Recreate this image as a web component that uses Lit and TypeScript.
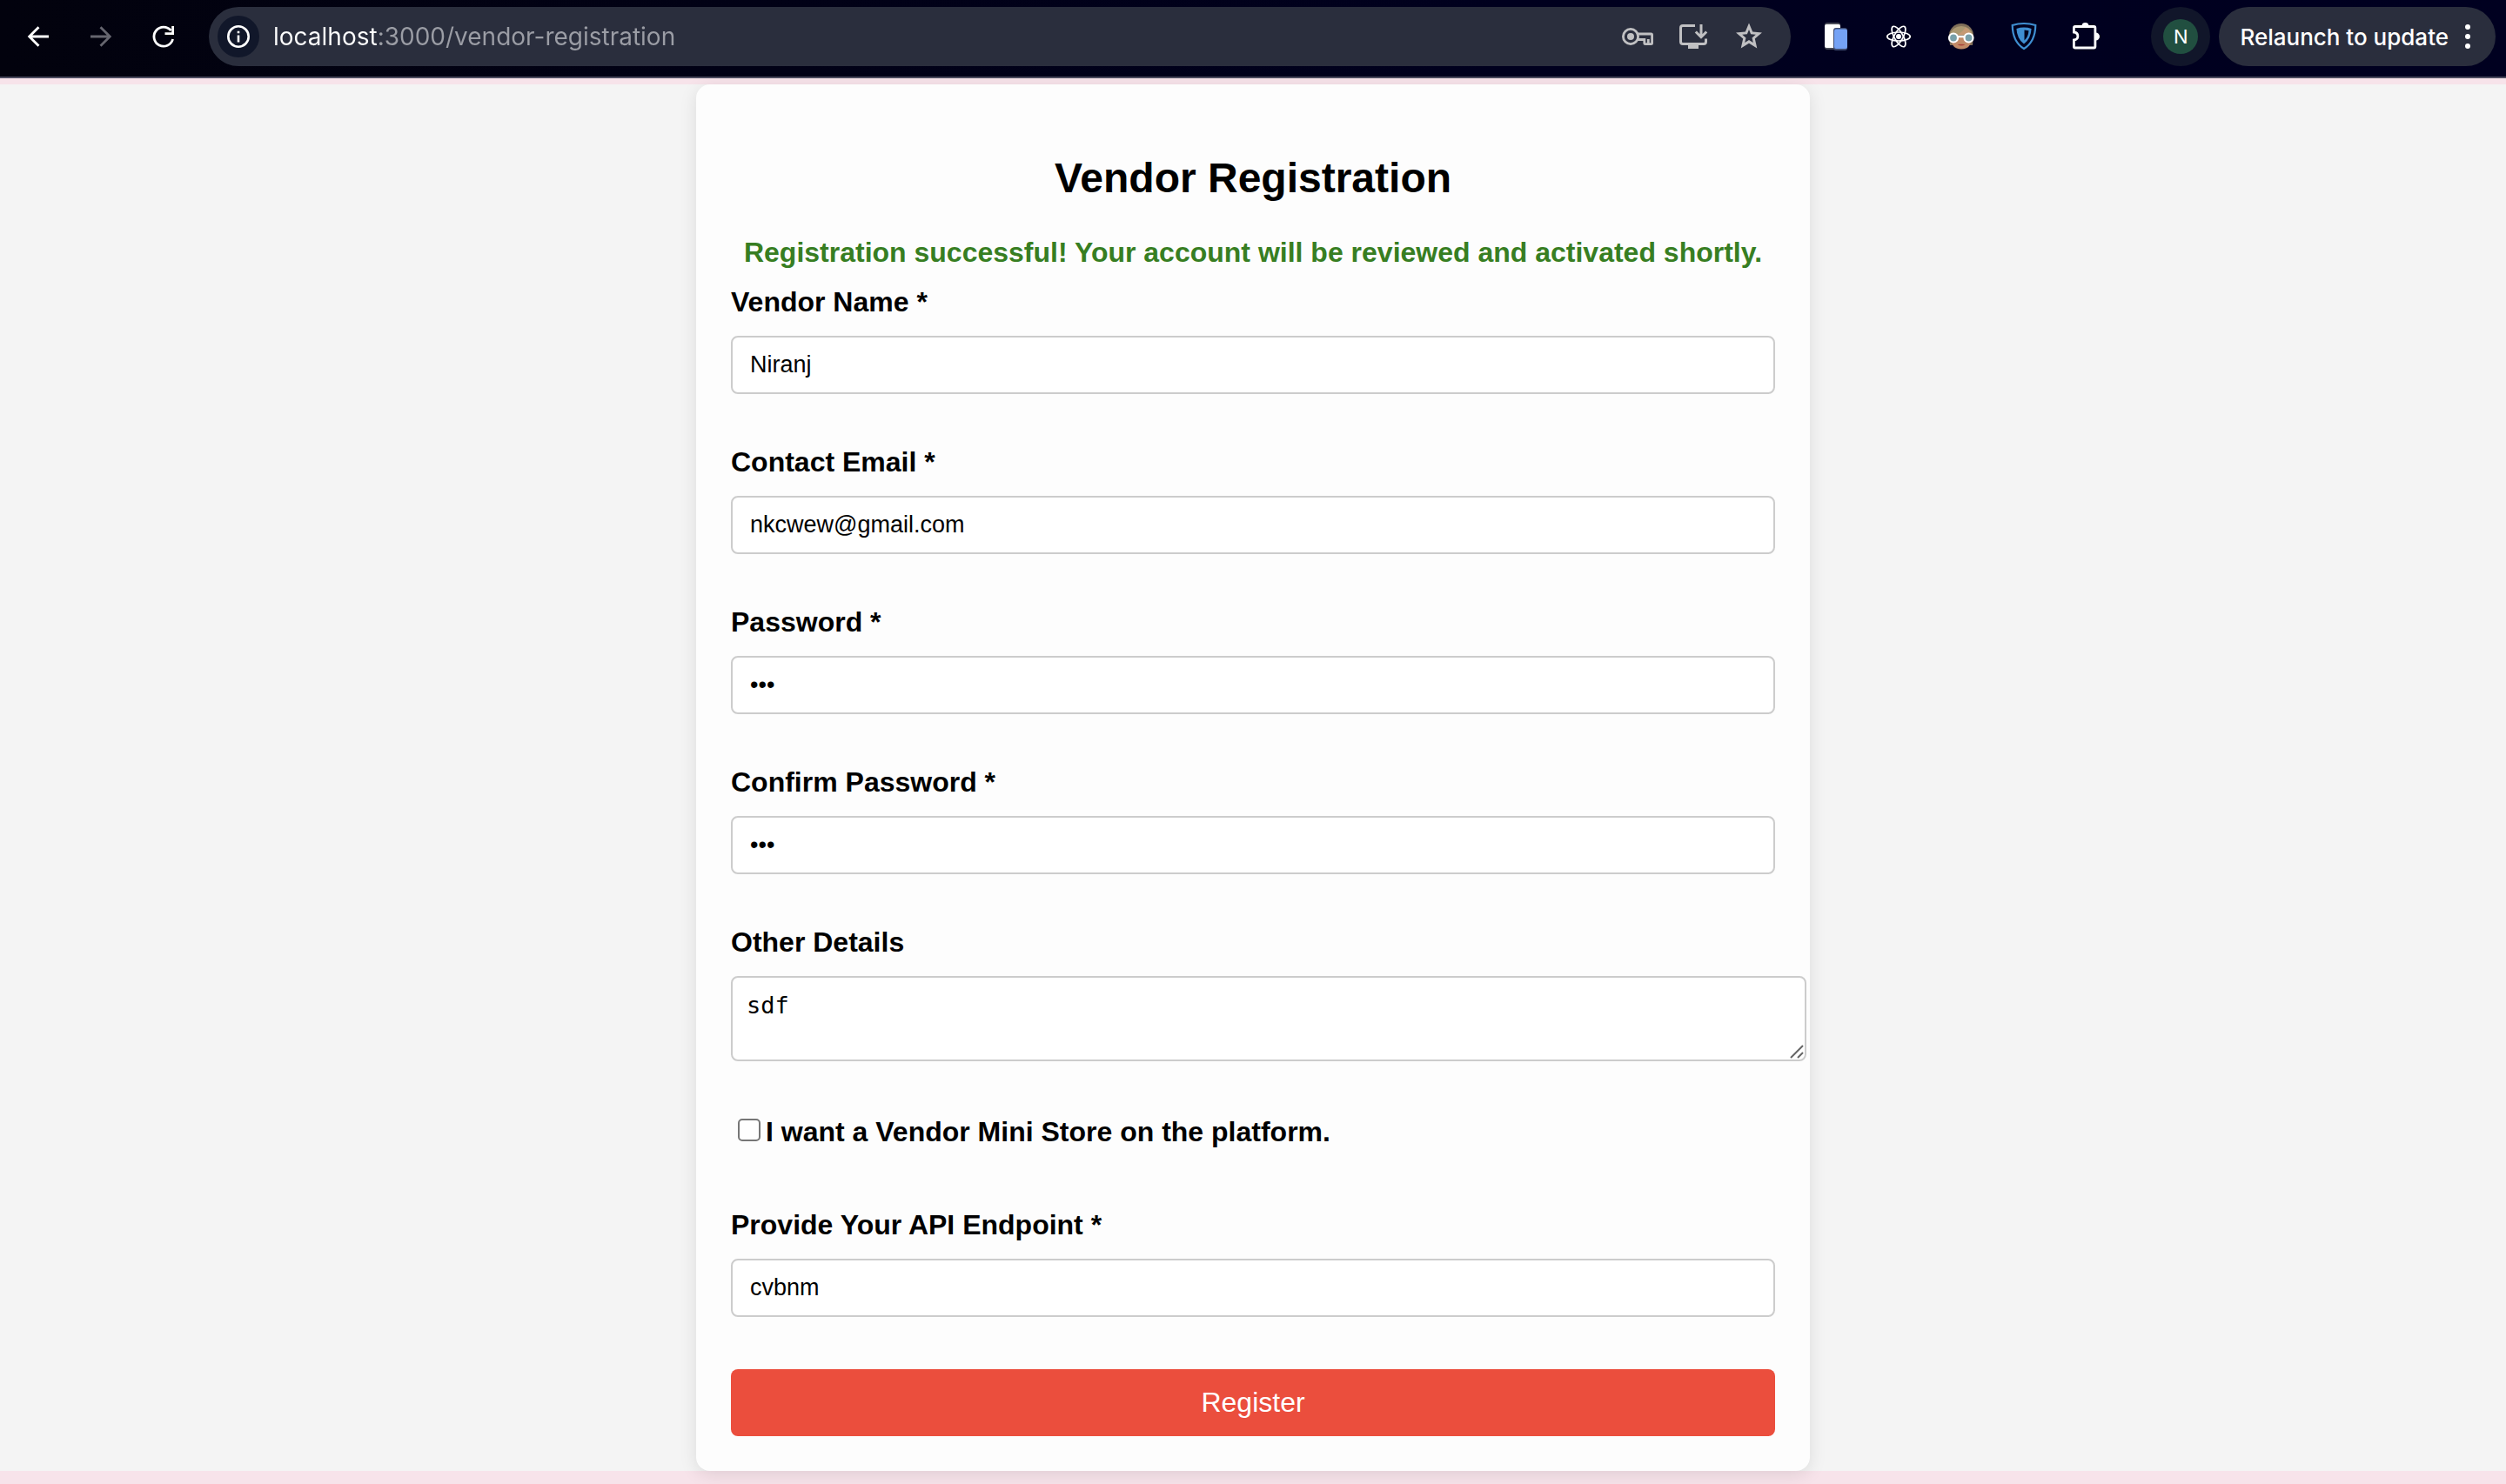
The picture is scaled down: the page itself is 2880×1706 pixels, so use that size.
import { LitElement, css, html, svg } from "lit";
import { customElement, property } from "lit/decorators.js";

type Field = { id: string; label: string; type: string; value: string };

const ACCOUNT_FIELDS: Field[] = [
  { id: "vendor-name", label: "Vendor Name *", type: "text", value: "Niranj" },
  { id: "contact-email", label: "Contact Email *", type: "email", value: "nkcwew@gmail.com" },
  { id: "password", label: "Password *", type: "password", value: "sdf" },
  { id: "confirm-password", label: "Confirm Password *", type: "password", value: "sdf" },
];

const ENDPOINT_FIELD: Field = {
  id: "api-endpoint",
  label: "Provide Your API Endpoint *",
  type: "text",
  value: "cvbnm",
};

/* All icons share a 36 by 36 canvas. */
const ICONS = {
  back: svg`<path d="M30 18H8M18.500 7.200L7.700 18L18.500 28.800" fill="none" stroke="currentColor" stroke-width="2.800"/>`,
  forward: svg`<path d="M6 18H28M17.500 7.200L28.300 18L17.500 28.800" fill="none" stroke="currentColor" stroke-width="2.800"/>`,
  reload: svg`<path d="M28.600 21A11 11 0 1 1 26.500 11.200" fill="none" stroke="currentColor" stroke-width="2.800"/><path d="M30 6V16H19.500V13.300H27.200V6Z" fill="currentColor"/>`,
  info: svg`<circle cx="18" cy="18" r="11.700" fill="none" stroke="currentColor" stroke-width="2.600"/><path d="M16.700 16.500H19.300V24.500H16.700ZM16.700 11.700H19.300V14.300H16.700Z" fill="currentColor"/>`,
  key: svg`<circle cx="10" cy="18" r="8.600" fill="none" stroke="currentColor" stroke-width="2.800"/><circle cx="10" cy="18" r="4" fill="currentColor"/><path d="M18 15H33.500Q34.600 15 34.600 16.200V25.500Q34.600 26.600 33.500 26.600H27Q25.800 26.600 25.800 25.500V21.500H18M30.300 21V26" fill="none" stroke="currentColor" stroke-width="2.800"/>`,
  install: svg`<path d="M20 5.500H6Q3.500 5.500 3.500 8V24Q3.500 26.500 6 26.500H30Q32.500 26.500 32.500 24V20.500" fill="none" stroke="currentColor" stroke-width="3"/><path d="M12 27H24V32H12Z" fill="currentColor"/><path d="M27 4V18M20.800 12.500L27 18.700L33.200 12.500" fill="none" stroke="currentColor" stroke-width="3"/>`,
  star: svg`<path fill-rule="evenodd" fill="currentColor" d="M18 2.500L22.200 12.500L33 13.400L24.800 20.500L27.300 31.500L18 25.700L8.700 31.500L11.200 20.500L3 13.400L13.800 12.500ZM18 10L15.900 15.200L10.200 15.700L14.500 19.400L13.200 25L18 22L22.800 25L21.500 19.400L25.800 15.700L20.100 15.200Z"/>`,
  devices: svg`<rect x="5" y="2" width="18" height="31" rx="3" fill="#4a4c58"/><rect x="5" y="4" width="18" height="27" rx="2" fill="#fff"/><rect x="15" y="8" width="16" height="26" rx="3" fill="#3f4c70"/><rect x="16" y="9.500" width="15" height="22.500" rx="2" fill="#75a2f5"/>`,
  atom: svg`<g fill="none" stroke="currentColor" stroke-width="1.700"><ellipse cx="18" cy="18" rx="13.200" ry="5"/><ellipse cx="18" cy="18" rx="13.200" ry="5" transform="rotate(60 18 18)"/><ellipse cx="18" cy="18" rx="13.200" ry="5" transform="rotate(120 18 18)"/></g><circle cx="18" cy="18" r="3" fill="currentColor"/>`,
  face: svg`<path d="M4 17A14 14 0 0 1 32 17L31 28H5Z" fill="#80705a"/><path d="M6 18H30Q30 32.500 18 32.500Q6 32.500 6 18Z" fill="#c18a67"/><path d="M4.500 16A14 13.500 0 0 1 31.500 16Z" fill="#aa9872"/><path d="M14 16Q20 12 23 7.500Q28 10 30 16Z" fill="#c59a74"/><path d="M13.500 27Q18 30 22.500 27Q18 26.500 13.500 27Z" fill="#a8453b"/><path d="M14 18H22" stroke="#fff" stroke-width="2.500"/><circle cx="9" cy="19.500" r="5" fill="#78a0aa" stroke="#fff" stroke-width="2.200"/><circle cx="26.500" cy="19.500" r="5" fill="#78a0aa" stroke="#fff" stroke-width="2.200"/>`,
  shield: svg`<path d="M18 3Q25 3 31.300 5Q31 24 18 32Q5 24 4.700 5Q11 3 18 3Z" fill="none" stroke="#3f8fd2" stroke-width="2.200"/><path d="M18 7.600Q22.500 7.600 26.600 8.900Q26 20.500 18 26.600Q10 20.500 9.400 8.900Q13.500 7.600 18 7.600Z" fill="#3f8fd2"/><path d="M18.500 10.500L23.500 11.200Q23 18.500 18.500 22.500Z" fill="#02051f"/>`,
  puzzle: svg`<path d="M5.500 8Q4 8 4 9.500V14.500Q8.500 15 8.500 19Q8.500 23 4 23.500V31Q4 32.500 5.500 32.500H27Q28.500 32.500 28.500 31V9.500Q28.500 8 27 8Z" fill="none" stroke="currentColor" stroke-width="2.800" transform="translate(-.6 -1.500)"/><path d="M12.500 6A4 4 0 0 1 20.500 6ZM28.500 13.500A4.500 4.500 0 0 1 28.500 22.500Z" fill="currentColor"/>`,
  more: svg`<circle cx="18" cy="7" r="3" fill="currentColor"/><circle cx="18" cy="18" r="3" fill="currentColor"/><circle cx="18" cy="29" r="3" fill="currentColor"/>`,
  grip: svg`<path d="M18 32L32 18M26 32L32 26" fill="none" stroke="#666" stroke-width="2"/>`,
};

const icon = (name: keyof typeof ICONS) =>
  html`<svg class="icon" viewBox="0 0 36 36" aria-hidden="true">${ICONS[name]}</svg>`;

@customElement("browser-bar")
export class BrowserBar extends LitElement {
  static styles = css`
    :host {
      display: block;
      font-family: Inter, "Liberation Sans", sans-serif;
    }
    .bar {
      display: flex;
      align-items: center;
      height: 68px;
      padding: 8px 12px 12px 8px;
      border-bottom: 2px solid #4b4a5e;
      background: linear-gradient(90deg, #02020d, #00001e 60%, #000020);
      color: #fff;
    }
    button {
      display: flex;
      align-items: center;
      justify-content: center;
      margin: 0;
      padding: 0;
      border: 0;
      background: none;
      color: inherit;
      font: inherit;
    }
    .icon {
      display: block;
      width: 36px;
      height: 36px;
    }
    .tool {
      width: 72px;
      height: 68px;
    }
    .tool:disabled {
      color: #66666f;
    }
    .address {
      display: flex;
      flex: 1;
      align-items: center;
      min-width: 0;
      height: 68px;
      margin: 0 16px;
      padding: 0 16px 0 10px;
      box-sizing: border-box;
      border-radius: 34px;
      background: #2a2e3d;
      color: #c0c0c2;
    }
    .site {
      width: 48px;
      height: 48px;
      border-radius: 24px;
      background: #11172a;
      color: #fff;
    }
    .url {
      flex: 1;
      min-width: 0;
      height: 40px;
      margin: 0;
      padding: 0 0 0 16px;
      border: 0;
      outline: 0;
      background: linear-gradient(90deg, #fff 136px, #9b9da5 136px);
      background-clip: text;
      -webkit-background-clip: text;
      color: transparent;
      font: 400 28px/40px Inter, "Liberation Sans", sans-serif;
    }
    .action {
      width: 64px;
      height: 68px;
    }
    .profile {
      width: 68px;
      height: 68px;
      margin: 0 10px 0 38px;
      border-radius: 34px;
      background: #11162a;
    }
    .initial {
      width: 40px;
      border-radius: 20px;
      background: #214f40;
      font-size: 22px;
      line-height: 40px;
    }
    .update {
      gap: 4px;
      height: 68px;
      padding: 0 14px 0 24px;
      border-radius: 34px;
      background: #2a2e3d;
      font-size: 26px;
      font-weight: 500;
      white-space: nowrap;
    }
  `;

  render() {
    return html`
      <header class="bar">
        <button class="tool" aria-label="Back">${icon("back")}</button>
        <button class="tool" aria-label="Forward" disabled>${icon("forward")}</button>
        <button class="tool" aria-label="Reload">${icon("reload")}</button>
        <div class="address">
          <button class="site" aria-label="Site information">${icon("info")}</button>
          <input class="url" type="text" aria-label="Address" value="localhost:3000/vendor-registration" />
          <button class="action" aria-label="Passwords">${icon("key")}</button>
          <button class="action" aria-label="Install">${icon("install")}</button>
          <button class="action" aria-label="Bookmark">${icon("star")}</button>
        </div>
        <button class="tool" aria-label="Devices">${icon("devices")}</button>
        <button class="tool" aria-label="React tools">${icon("atom")}</button>
        <button class="tool" aria-label="Reader">${icon("face")}</button>
        <button class="tool" aria-label="VPN">${icon("shield")}</button>
        <button class="tool" aria-label="Extensions">${icon("puzzle")}</button>
        <button class="profile" aria-label="Profile"><span class="initial">N</span></button>
        <button class="update">Relaunch to update ${icon("more")}</button>
      </header>
    `;
  }
}

@customElement("vendor-form")
export class VendorForm extends LitElement {
  @property({ type: Boolean }) registered = false;

  static styles = css`
    :host {
      display: block;
      width: 100%;
      max-width: 1280px;
    }
    .card {
      padding: 40px;
      border-radius: 16px;
      background: #fdfdfd;
      box-shadow: 0 4px 20px rgba(0, 0, 0, 0.1);
      color: #000;
      font: 32px/37px "Liberation Sans", Arial, sans-serif;
    }
    .title {
      margin: 40px 0;
      font-size: 48px;
      line-height: 55px;
      text-align: center;
    }
    .message {
      margin: 0 0 20px;
      color: #377e22;
      font-weight: bold;
      text-align: center;
    }
    .field {
      margin-bottom: 60px;
    }
    .label {
      display: block;
      margin-bottom: 20px;
      font-weight: bold;
    }
    .input,
    .details {
      display: block;
      box-sizing: border-box;
      margin: 0;
      border: 2px solid #ccc;
      border-radius: 8px;
      background: #fff;
      color: #000;
    }
    .input {
      width: 100%;
      padding: 16px 20px;
      font: 27px/31px "Liberation Sans", Arial, sans-serif;
      height: 67px;
    }
    .area {
      position: relative;
      width: calc(100% + 36px);
    }
    .details {
      width: 100%;
      height: 98px;
      padding: 16px;
      font: 27px/31px "DejaVu Sans Mono", monospace;
    }
    .details::-webkit-resizer {
      background: transparent;
    }
    .icon {
      position: absolute;
      right: 0;
      bottom: 0;
      width: 36px;
      height: 36px;
      pointer-events: none;
    }
    .choice {
      display: flex;
      align-items: center;
      margin-bottom: 60px;
      padding: 3px 0 10px;
      font-weight: bold;
    }
    .box {
      appearance: none;
      box-sizing: border-box;
      width: 26px;
      height: 26px;
      margin: 0 6px 6px 8px;
      border: 2px solid #767676;
      border-radius: 5px;
      background: #fff;
    }
    .submit {
      display: block;
      width: 100%;
      margin: 0;
      padding: 20px;
      border: 0;
      border-radius: 8px;
      background: #eb4e3d;
      color: #fff;
      font: inherit;
    }
  `;

  private field({ id, label, type, value }: Field) {
    return html`
      <div class="field">
        <label class="label" for=${id}>${label}</label>
        <input class="input" id=${id} type=${type} .value=${value} />
      </div>
    `;
  }

  render() {
    return html`
      <form class="card" @submit=${(e: Event) => e.preventDefault()}>
        <h2 class="title">Vendor Registration</h2>
        ${this.registered
          ? html`<p class="message" role="status">
              Registration successful! Your account will be reviewed and activated shortly.
            </p>`
          : null}
        ${ACCOUNT_FIELDS.map((f) => this.field(f))}
        <div class="field">
          <label class="label" for="other-details">Other Details</label>
          <div class="area">
            <textarea class="details" id="other-details" .value=${"sdf"}></textarea>
            ${icon("grip")}
          </div>
        </div>
        <div class="choice">
          <input class="box" id="mini-store" type="checkbox" />
          <label for="mini-store">I want a Vendor Mini Store on the platform.</label>
        </div>
        ${this.field(ENDPOINT_FIELD)}
        <button class="submit" type="submit">Register</button>
      </form>
    `;
  }
}

@customElement("app-root")
export class AppRoot extends LitElement {
  static styles = css`
    :host {
      display: block;
      min-height: 100vh;
      background: #f7e3ea;
    }
    .page {
      display: flex;
      justify-content: center;
      margin-top: 7px;
      background: #f4f4f4;
    }
  `;

  render() {
    return html`
      <browser-bar></browser-bar>
      <main class="page"><vendor-form registered></vendor-form></main>
    `;
  }
}
